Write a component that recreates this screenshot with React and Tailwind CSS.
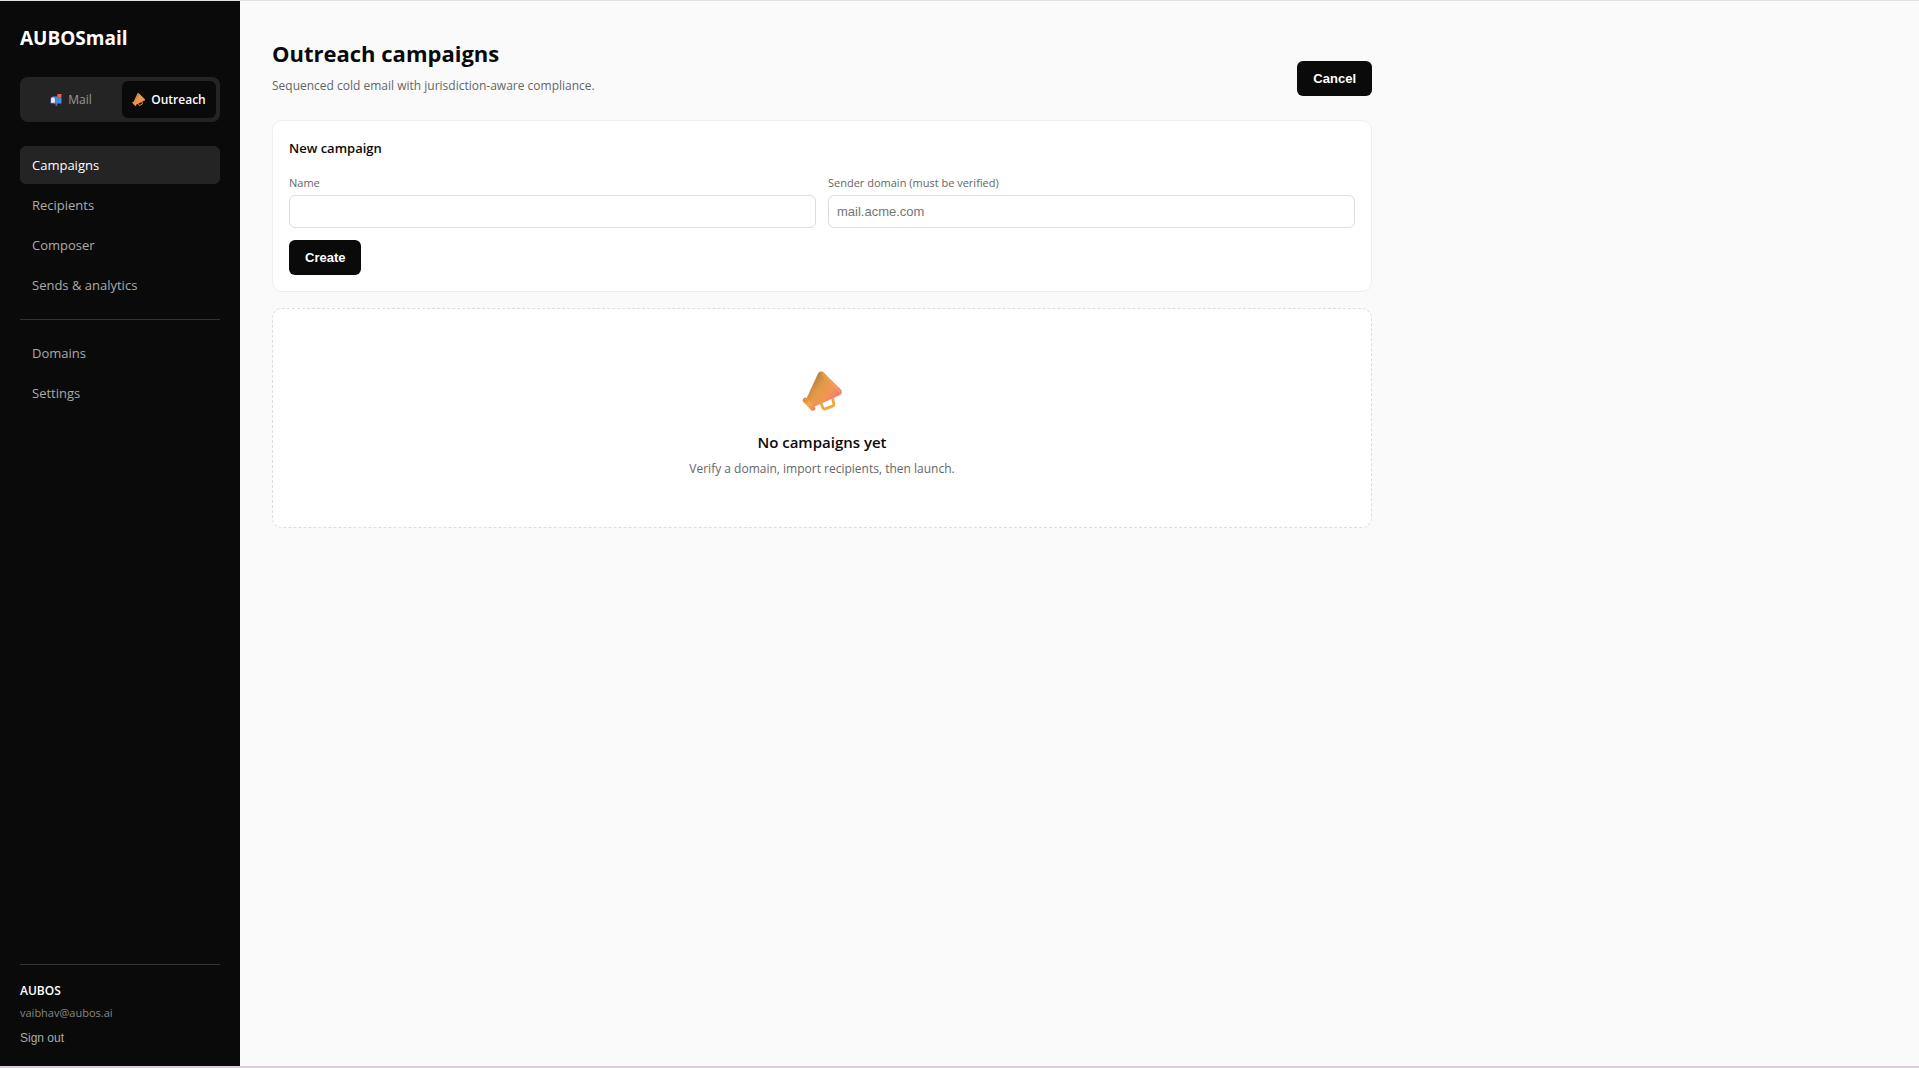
import { useState } from "react";

const NAV_MAIN = ["Campaigns", "Recipients", "Composer", "Sends & analytics"];
const NAV_SECONDARY = ["Domains", "Settings"];

function MailboxIcon({ className }) {
  return (
    <svg viewBox="0 0 24 24" className={className} aria-hidden="true">
      <rect x="11" y="16" width="3.4" height="8" rx="1" fill="#8d5a68" />
      <path d="M6 5h12a5 5 0 0 1 5 5v9H6z" fill="#3f8fe0" />
      <path d="M1 10a5 5 0 0 1 10 0v9H1z" fill="#5b62b8" />
      <path d="M2 10.5a4 4 0 0 1 8 0V17.5H2z" fill="#e9e4fb" />
      <rect x="15" y="1" width="2" height="10" fill="#b64a4a" />
      <path d="M15 0h8v6h-8z" fill="#e8604f" />
    </svg>
  );
}

function MegaphoneIcon({ className }) {
  return (
    <svg viewBox="0 0 40 40" className={className} aria-hidden="true">
      <defs>
        <linearGradient id="cone" x1="8" y1="14" x2="30" y2="30" gradientUnits="userSpaceOnUse">
          <stop offset="0" stopColor="#b98242" />
          <stop offset="0.35" stopColor="#e39a48" />
          <stop offset="0.75" stopColor="#f09554" />
          <stop offset="1" stopColor="#f07f70" />
        </linearGradient>
        <linearGradient id="rim" x1="2" y1="28" x2="12" y2="39" gradientUnits="userSpaceOnUse">
          <stop offset="0" stopColor="#d88a3c" />
          <stop offset="0.5" stopColor="#f5a848" />
          <stop offset="1" stopColor="#ee7f62" />
        </linearGradient>
      </defs>
      <path d="M19.5 33l1.2 3.6a2 2 0 0 0 2.5 1.3l7.4-2.8a2 2 0 0 0 1.2-2.4l-1-4.6" fill="none" stroke="#f2a83c" strokeWidth="2.8" strokeLinecap="round" />
      <path d="M4.5 27.6L16 2.6a3.5 3.5 0 0 1 5.6-1.2L38.8 18.6a3.5 3.5 0 0 1-1.1 5.6L12.2 35.8z" fill="url(#cone)" />
      <path d="M20 2.6L37.6 20.4" stroke="#f6a956" strokeWidth="1.8" strokeLinecap="round" opacity="0.6" />
      <path d="M3.2 29.2L10.8 37.2" stroke="url(#rim)" strokeWidth="5" strokeLinecap="round" />
    </svg>
  );
}

function NavItem({ label, active, onSelect }) {
  return (
    <a
      href="#"
      onClick={(event) => {
        event.preventDefault();
        onSelect(label);
      }}
      className={`block rounded-md px-3 py-2 text-[13px] leading-[22px] ${
        active ? "bg-[#242424] text-white" : "text-[#aaaaaa] hover:text-white"
      }`}
    >
      {label}
    </a>
  );
}

export default function App() {
  const [mode, setMode] = useState("outreach");
  const [page, setPage] = useState("Campaigns");
  const [showForm, setShowForm] = useState(true);
  const [formData, setFormData] = useState({ name: "", domain: "" });

  const handleChange = (event) => {
    const { name, value } = event.target;
    setFormData({ ...formData, [name]: value });
  };

  const tabClass = (active) =>
    `flex flex-1 items-center justify-center rounded-md text-[12px] leading-[21px] py-2 gap-[6px] ${
      active ? "bg-[#0a0a0a] font-semibold text-white" : "font-medium text-[#999999]"
    }`;

  const inputClass =
    "w-full rounded-md border border-[#dddddd] bg-white px-2 py-[7px] font-['Liberation_Sans',sans-serif] text-[13px] leading-[17px] text-[#0a0a0a] placeholder:text-[#757575] focus:outline-none focus:border-[#0a0a0a]";

  const buttonClass =
    "rounded-md bg-[#0a0a0a] px-4 py-[10px] font-['Liberation_Sans',sans-serif] text-[13px] leading-[15px] font-bold text-white hover:bg-[#242424]";

  return (
    <div className="flex min-h-screen flex-col border-t border-b-2 border-t-[#e0e0e0] border-b-[#dccbd8] bg-[#fafafa] font-['Open_Sans',sans-serif] text-[#0a0a0a]">
      <div className="flex grow">
        {/* Sidebar */}
        <aside className="flex w-60 shrink-0 flex-col bg-[#0a0a0a] p-5">
          <div className="mb-[22px] text-[19px] leading-[34px] font-bold text-white">AUBOSmail</div>

          <div className="mb-6 flex gap-1 rounded-lg bg-[#242424] p-1">
            <button type="button" onClick={() => setMode("mail")} className={tabClass(mode === "mail")}>
              <MailboxIcon className="h-3 w-3" />
              Mail
            </button>
            <button type="button" onClick={() => setMode("outreach")} className={tabClass(mode === "outreach")}>
              <MegaphoneIcon className="h-[13px] w-[13px]" />
              Outreach
            </button>
          </div>

          <nav className="flex flex-col">
            <div className="flex flex-col gap-[2px]">
              {NAV_MAIN.map((label) => (
                <NavItem key={label} label={label} active={page === label} onSelect={setPage} />
              ))}
            </div>
            <hr className="mt-[15px] mb-[14px] border-[#333333]" />
            <div className="flex flex-col gap-[2px]">
              {NAV_SECONDARY.map((label) => (
                <NavItem key={label} label={label} active={page === label} onSelect={setPage} />
              ))}
            </div>
          </nav>

          <div className="mt-auto flex flex-col items-start border-t border-[#333333] pt-4">
            <div className="text-[12px] leading-5 font-semibold text-white">AUBOS</div>
            <div className="mt-[2px] text-[11px] leading-5 text-[#888888]">vaibhav@aubos.ai</div>
            <button type="button" className="mt-[7px] font-['Liberation_Sans',sans-serif] text-[12px] leading-4 text-[#aaaaaa] hover:text-white">
              Sign out
            </button>
          </div>
        </aside>

        {/* Content */}
        <main className="min-w-0 grow p-8">
          <div className="max-w-[1100px]">
            <div className="mb-6 flex items-end justify-between">
              <div>
                <h1 className="text-[22px] leading-[41px] font-bold">Outreach campaigns</h1>
                <p className="mt-[2px] text-[12px] leading-5 text-[#666666]">
                  Sequenced cold email with jurisdiction-aware compliance.
                </p>
              </div>
              <button type="button" onClick={() => setShowForm(!showForm)} className={buttonClass}>
                {showForm ? "Cancel" : "New campaign"}
              </button>
            </div>

            {showForm && (
              <form
                onSubmit={(event) => event.preventDefault()}
                className="mb-4 rounded-[10px] border border-[#eeeeee] bg-white p-4"
              >
                <h2 className="mb-[14px] text-[13px] leading-[22px] font-semibold">New campaign</h2>
                <div className="mb-3 grid grid-cols-2 gap-3">
                  <div>
                    <label htmlFor="name" className="mb-[2px] block text-[11px] leading-5 text-[#666666]">
                      Name
                    </label>
                    <input id="name" name="name" type="text" value={formData.name} onChange={handleChange} className={inputClass} />
                  </div>
                  <div>
                    <label htmlFor="domain" className="mb-[2px] block text-[11px] leading-5 text-[#666666]">
                      Sender domain (must be verified)
                    </label>
                    <input
                      id="domain"
                      name="domain"
                      type="text"
                      placeholder="mail.acme.com"
                      value={formData.domain}
                      onChange={handleChange}
                      className={inputClass}
                    />
                  </div>
                </div>
                <button type="submit" className={buttonClass}>
                  Create
                </button>
              </form>
            )}

            <div className="flex flex-col items-center rounded-[10px] border border-dashed border-[#dddddd] bg-white px-6 pt-[62px] pb-12 text-center">
              <MegaphoneIcon className="mb-[18px] h-10 w-10" />
              <h3 className="text-[15px] leading-[26px] font-semibold">No campaigns yet</h3>
              <p className="mt-1 text-[12px] leading-5 text-[#666666]">Verify a domain, import recipients, then launch.</p>
            </div>
          </div>
        </main>
      </div>
    </div>
  );
}
